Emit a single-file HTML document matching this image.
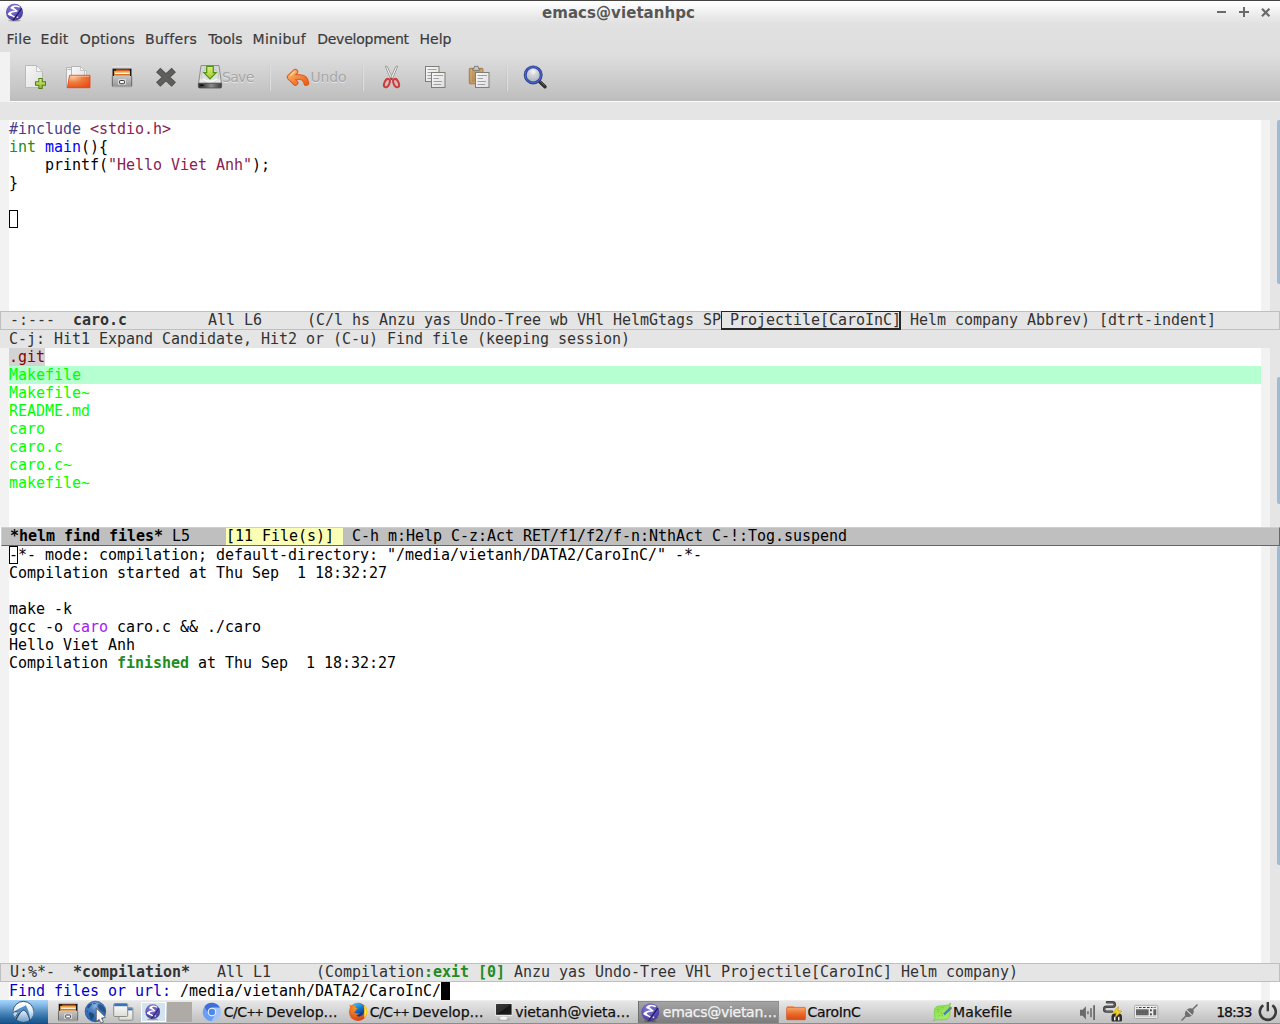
<!DOCTYPE html>
<html lang="en">
<head>
<meta charset="utf-8">
<title>emacs@vietanhpc</title>
<style>
html,body{margin:0;padding:0;}
body{width:1280px;height:1024px;overflow:hidden;position:relative;background:#fff;font-family:"DejaVu Sans","Liberation Sans",sans-serif;}
.abs{position:absolute;}
/* ---------- window chrome ---------- */
#topline{left:0;top:0;width:1280px;height:1px;background:#444;}
#titlebar{left:0;top:1px;width:1280px;height:51px;background:linear-gradient(#ffffff 0px,#fbfbfb 4px,#f0f0f0 11px,#e7e7e7 17px,#e1e1e1 23px,#e0e0e0 27px,#dfdfdf 51px);}
#title{left:542px;top:3px;letter-spacing:0.06px;white-space:pre;font:bold 15px/20px "DejaVu Sans","Liberation Sans",sans-serif;color:#575757;}
#menubar{left:0;top:29px;width:1280px;height:24px;font:14px/20px "DejaVu Sans","Liberation Sans",sans-serif;color:#3c3c3c;white-space:pre;-webkit-text-stroke:0.2px currentColor;}
#menubar span{position:absolute;top:0;}
#toolbar{left:10px;top:52px;width:1270px;height:49px;background:linear-gradient(#dfdfdf 0,#dadada 9px,#cfcfcf 24px,#c5c5c5 38px,#bdbdbd 49px);}
#tbhandle{left:0;top:52px;width:10px;height:50px;background:#f2f2f2;}
#tbline{left:10px;top:101px;width:1270px;height:1px;background:#fbfbfb;}
.tbtxt{font:14px/20px "DejaVu Sans","Liberation Sans",sans-serif;color:#a6a6a6;text-shadow:0 1px 0 rgba(255,255,255,0.55);}
.sep{width:1px;height:27px;top:64px;background:#dedede;box-shadow:-1px 0 0 rgba(0,0,0,0.03);}
/* ---------- emacs ---------- */
.mono{font-family:"DejaVu Sans Mono","Liberation Mono",monospace;font-size:15px;line-height:18px;letter-spacing:-0.03px;white-space:pre;color:#000;}
.ln{position:absolute;left:9px;height:18px;}
.fr{background:#f2f2f2;}
.g90{background:#e5e5e5;}
.ml{background:#e5e5e5;color:#333;overflow:hidden;}.ml::after{content:"";position:absolute;left:0;top:0;right:0;bottom:0;border:1px solid #bfbfbf;}
.ml span.t{position:absolute;left:1px;top:0;}.mla span.t{position:absolute;left:0;top:0;}
.mla{background:#bfbfbf;color:#000;overflow:hidden;}.mla::after{content:"";position:absolute;left:0;top:0;right:0;bottom:0;border-style:solid;border-width:1px;border-color:#cfcfcf #666 #666 #cfcfcf;}
b{font-weight:bold;}
.thumb{left:1277px;width:4px;background:#9fbbd4;border-radius:2px 0 0 2px;}
/* ---------- taskbar ---------- */
#taskbar{left:0;top:1000px;width:1280px;height:24px;background:linear-gradient(#f0f0f0 0,#e6e6e6 1.500px,#dedede 6px,#d5d5d5 11px,#cbcbcb 16px,#c3c3c3 21px,#c2c2c2 24px);}
.tk{font:14px/20px "DejaVu Sans","Liberation Sans",sans-serif;color:#111;white-space:pre;top:2px;-webkit-text-stroke:0.25px currentColor;}
</style>
</head>
<body>
<!-- title bar -->
<div class="abs" id="titlebar"></div>
<div class="abs" id="topline"></div>
<div class="abs" id="title">emacs@vietanhpc</div>
<svg class="abs" style="left:0;top:0" width="1280" height="27" viewBox="0 0 1280 27">
<defs><radialGradient id="wE" cx="0.4" cy="0.3" r="0.8"><stop offset="0" stop-color="#8a80d8"/><stop offset="0.6" stop-color="#5a4fb2"/><stop offset="1" stop-color="#3f3590"/></radialGradient></defs>
<ellipse cx="14.500" cy="20.700" rx="6.500" ry="0.900" fill="#444" opacity="0.400"/>
<g transform="translate(14.500 12.300) scale(1)">
<circle cx="0" cy="0" r="8.500" fill="url(#wE)"/>
<path d="M4.600 -5.400C2 -7 -2 -6.600 -3.300 -4.500C-1 -3.600 1 -2.600 2.300 -1.300C-1 -0.900 -5 -0.100 -6 1.700C-4 3 -1.500 3.500 -0.200 4.700" fill="none" stroke="#fff" stroke-width="1.500" stroke-linecap="round" stroke-linejoin="round"/><path d="M-6.200 1.700c0.600 -1.500 2.800 -2 4.600 -2.200c-1 0.800 -2 1.400 -1.800 2.200c0.300 0.800 1.600 1.300 2.600 2.200c-2.200 -0.500 -4.600 -1 -5.400 -2.200z" fill="#fff"/><path d="M-3.400 -4.500c0.800 -1.300 2.800 -1.800 4.400 -1.700c-1 0.500 -1.800 1 -1.700 1.700c0.200 0.700 1.400 1.200 2.400 2c-2 -0.400 -4.300 -0.900 -5.100 -2z" fill="#fff"/><circle cx="3" cy="5" r="0.800" fill="#fff"/>
<path d="M-1.700 8.300L7.200 -3.800" stroke="#1a1560" stroke-width="1.100"/>
</g>
<path d="M1217 12h9" stroke="#6a6a6a" stroke-width="2"/>
<path d="M1239 12h10M1244 7v10" stroke="#6a6a6a" stroke-width="2"/>
<path d="M1262 8.700l7.400 7.600M1269.400 8.700l-7.400 7.600" stroke="#6a6a6a" stroke-width="2.200"/>
</svg>
<!-- menu bar -->
<div class="abs" id="menubar"><span style="left:6.5px;letter-spacing:0.43px">File</span><span style="left:40.600px;letter-spacing:0.19px">Edit</span><span style="left:79.700px;letter-spacing:0.18px">Options</span><span style="left:145px;letter-spacing:0.32px">Buffers</span><span style="left:208.200px;letter-spacing:-0.05px">Tools</span><span style="left:252.600px;letter-spacing:0.28px">Minibuf</span><span style="left:317.200px;letter-spacing:-0.24px">Development</span><span style="left:419.600px">Help</span></div>
<!-- tool bar -->
<div class="abs" id="toolbar"></div>
<div class="abs" id="tbhandle"></div>
<div class="abs" id="tbline"></div>
<div class="abs tbtxt" style="left:222px;top:67px;letter-spacing:-0.7px">Save</div>
<div class="abs tbtxt" style="left:310.500px;top:67px;letter-spacing:-0.17px">Undo</div>
<div class="abs sep" style="left:270px"></div>
<div class="abs sep" style="left:363px"></div>
<div class="abs sep" style="left:507px"></div>

<!-- ICONS-TOOLBAR-START -->
<svg class="abs" style="left:0;top:52px" width="600" height="50" viewBox="0 52 600 50">
<defs>
<linearGradient id="gPage" x1="0" y1="0" x2="1" y2="1"><stop offset="0" stop-color="#f8f8f8"/><stop offset="1" stop-color="#dedede"/></linearGradient>
<linearGradient id="gOr" x1="0" y1="0" x2="0" y2="1"><stop offset="0" stop-color="#f8a66b"/><stop offset="0.5" stop-color="#f0703a"/><stop offset="1" stop-color="#e4471b"/></linearGradient>
<radialGradient id="gOr2" cx="0.250" cy="0.150" r="1"><stop offset="0" stop-color="#f8c898"/><stop offset="0.450" stop-color="#ee7a3c"/><stop offset="1" stop-color="#ea4a16"/></radialGradient><linearGradient id="gGr" x1="0" y1="0" x2="0" y2="1"><stop offset="0" stop-color="#d8ec84"/><stop offset="1" stop-color="#92ba2a"/></linearGradient>
<linearGradient id="gDr" x1="0" y1="0" x2="0" y2="1"><stop offset="0" stop-color="#c6c6c6"/><stop offset="1" stop-color="#989898"/></linearGradient><linearGradient id="gDrT" x1="0" y1="0" x2="0" y2="1"><stop offset="0" stop-color="#ececec"/><stop offset="1" stop-color="#bcbcbc"/></linearGradient>
<linearGradient id="gHd" x1="0" y1="0" x2="0" y2="1"><stop offset="0" stop-color="#d2d2d2"/><stop offset="0.700" stop-color="#dedede"/><stop offset="1" stop-color="#efefef"/></linearGradient><linearGradient id="gHdF" x1="0" y1="0" x2="1" y2="0"><stop offset="0" stop-color="#2c2c2c"/><stop offset="0.250" stop-color="#4a4a4a"/><stop offset="0.550" stop-color="#8c8c8c"/><stop offset="1" stop-color="#3c3c3c"/></linearGradient><linearGradient id="gGr2" x1="0" y1="0" x2="0" y2="1"><stop offset="0" stop-color="#dcec7a"/><stop offset="1" stop-color="#a2c832"/></linearGradient>
<linearGradient id="gUn" x1="0" y1="0" x2="1" y2="1"><stop offset="0" stop-color="#fbb565"/><stop offset="1" stop-color="#ee5f1c"/></linearGradient>
<radialGradient id="gLens" cx="0.5" cy="0.300" r="0.650"><stop offset="0" stop-color="#fafafa"/><stop offset="0.350" stop-color="#d4d6da"/><stop offset="1" stop-color="#aeb2bc"/></radialGradient>
<linearGradient id="gClip" x1="0" y1="0" x2="0" y2="1"><stop offset="0" stop-color="#c9a06a"/><stop offset="1" stop-color="#b48850"/></linearGradient>
</defs>
<!-- new -->
<g>
<path d="M25.500 66h11l6 6v16h-17z" fill="#8a8a8a" opacity="0.350"/>
<path d="M25.500 65.500h11l6 6v16h-17z" fill="url(#gPage)" stroke="#b9b9b9" stroke-width="1"/>
<path d="M36.500 65.500v6h6z" fill="#f6f6f6" stroke="#bdbdbd" stroke-width="0.800"/>
<path d="M38.300 78h4.400v3.300h3.300v4.400h-3.300v3.300h-4.400v-3.300h-3.300v-4.400h3.300z" fill="#4f7f12"/>
<path d="M39.300 79h2.400v3.300h3.300v2.400h-3.300v3.300h-2.400v-3.300h-3.300v-2.400h3.300z" fill="url(#gGr)"/>
</g>
<!-- open -->
<g>
<path d="M66.500 67.500h5v20h-5z" fill="#f4f4f4" stroke="#b4b4b4"/>
<path d="M67.500 69.500h3.500" stroke="#f3a558" stroke-width="1"/>
<path d="M71.500 66.500h9l4 4v17h-13z" fill="url(#gPage)" stroke="#b4b4b4"/>
<path d="M80.500 66.500v4h4z" fill="#f8f8f8" stroke="#bdbdbd" stroke-width="0.800"/>
<path d="M84.500 70.500h2v8h-2z" fill="#ededed" stroke="#bdbdbd" stroke-width="0.800"/>
<path d="M69.500 75.300h20.500v12.400h-22.700z" fill="url(#gOr2)" stroke="#d9441a" stroke-width="0.800"/>
<path d="M70.300 76.300h19" stroke="#fbc9a4" stroke-width="0.800"/>
</g>
<!-- dired drawer -->
<g id="drw">
<rect x="112" y="66" width="20" height="3" rx="0.800" fill="url(#gDrT)"/>
<rect x="112.500" y="68.700" width="19" height="7.500" fill="#1c1c1c"/>
<rect x="116" y="69.400" width="13.500" height="2" fill="#c9521a"/>
<rect x="114" y="70.800" width="16" height="5.400" fill="#f0a040"/>
<rect x="115" y="72.600" width="14.500" height="1.400" fill="#fff6e8"/>
<rect x="114" y="74.200" width="16" height="0.700" fill="#c9641e"/>
<rect x="112" y="76" width="20" height="10" fill="url(#gDr)"/>
<path d="M112.300 76v10M131.700 76v10" stroke="#4a4a4a" stroke-width="0.700"/>
<rect x="118" y="78.900" width="8" height="5.800" rx="0.800" fill="#dadada"/>
<rect x="119.600" y="80.500" width="4.800" height="3.200" rx="0.600" fill="#fafafa" stroke="#3e3e3e" stroke-width="1"/>
<rect x="112" y="86" width="20" height="1.200" fill="#6e6e6e" opacity="0.450"/>
</g>
<!-- close X -->
<g>
<path d="M158.200 70l15.600 14.600M173.800 70l-15.600 14.600" stroke="#4c4c4a" stroke-width="6.200" stroke-linecap="butt"/>
<path d="M158.700 70.500l14.600 13.600M173.300 70.500l-14.600 13.600" stroke="#5e5e5b" stroke-width="4.600" stroke-linecap="butt"/>
</g>
<!-- save -->
<g>
<path d="M201 65.500h18l2.400 17.700h-22.800z" fill="url(#gHd)" stroke="#8e8e8e" stroke-width="1"/>
<ellipse cx="210" cy="75.500" rx="8.600" ry="7.600" fill="none" stroke="#bdbdbd" stroke-width="0.700"/>
<path d="M202.500 79q7.500 5 15 0" fill="none" stroke="#f4f4f4" stroke-width="1.800"/>
<path d="M198.400 83.300h23.200v3.400q0 1.300-1.300 1.300h-20.600q-1.300 0-1.300-1.300z" fill="url(#gHdF)" stroke="#4e4e4e" stroke-width="0.800"/>
<rect x="200.300" y="84.600" width="3.400" height="1.500" rx="0.700" fill="#0a0a0a"/>
<path d="M206.700 66.400h6.600v6.200h2.800l-6.100 6.400l-6.100-6.400h2.800z" fill="url(#gGr2)" stroke="#4c9410" stroke-width="1.200" stroke-linejoin="miter"/>
</g>
<!-- undo -->
<g>
<path d="M295.300 71.800l-5.600 5.400l5.800 5.600M290.500 77.200h9.500q5.500 0.300 6.300 5.800" fill="none" stroke="#d9561a" stroke-width="5.800" stroke-linecap="round" stroke-linejoin="round"/>
<path d="M295.300 71.800l-5.600 5.400l5.800 5.600M290.500 77.200h9.500q5.500 0.300 6.300 5.800" fill="none" stroke="url(#gUn)" stroke-width="4" stroke-linecap="round" stroke-linejoin="round"/>
<path d="M294.500 71.600l-4 3.900" fill="none" stroke="#fdd29a" stroke-width="1.500" stroke-linecap="round"/>
</g>
<!-- cut -->
<g>
<path d="M385.300 66.300l1.800 0l5.600 12.300l-1.700 1.300z" fill="#f4f4f4" stroke="#8a8a86" stroke-width="0.800"/>
<path d="M397.700 66.300l-1.800 0l-5.600 12.300l1.700 1.300z" fill="#f4f4f4" stroke="#8a8a86" stroke-width="0.800"/>
<ellipse cx="386.900" cy="83.100" rx="2.500" ry="4.400" transform="rotate(24 386.900 83.100)" fill="#e8a8a8" fill-opacity="0.450" stroke="#cb3c3c" stroke-width="2"/>
<ellipse cx="396.100" cy="83.100" rx="2.500" ry="4.400" transform="rotate(-24 396.100 83.100)" fill="#e8a8a8" fill-opacity="0.450" stroke="#cb3c3c" stroke-width="2"/>
<circle cx="391.500" cy="78.800" r="1.300" fill="#c43030"/>
</g>
<!-- copy -->
<g>
<rect x="425.500" y="66.500" width="13.500" height="15" fill="url(#gPage)" stroke="#7e7e76" stroke-width="1"/>
<path d="M427.500 69.500h9M427.500 72.500h4M427.500 75.500h4M427.500 78.500h4" stroke="#9f9f9f" stroke-width="1"/>
<rect x="431.500" y="72.500" width="13.500" height="15" fill="url(#gPage)" stroke="#7e7e76" stroke-width="1"/>
<path d="M433.500 75.500h9.500M433.500 78.500h5.500M433.500 81.500h8.500M433.500 84.500h7.500" stroke="#9f9f9f" stroke-width="1"/>
</g>
<!-- paste -->
<g>
<rect x="469.300" y="68.300" width="13.600" height="15.500" rx="0.800" fill="url(#gClip)" stroke="#a77d45" stroke-width="1"/>
<rect x="471" y="70" width="10.200" height="12.200" fill="none" stroke="#d9b888" stroke-width="0.600"/>
<path d="M474.500 66.300h3.500l0.600 2.400h1.200v1.600h-7.100v-1.600h1.200z" fill="#c9c9c9" stroke="#6a6a6a" stroke-width="0.800"/>
<rect x="475.500" y="72.500" width="13.500" height="15" fill="url(#gPage)" stroke="#7e7e76" stroke-width="1"/>
<path d="M477.500 75.500h9.500M477.500 78.500h5.500M477.500 81.500h8.500M477.500 84.500h7.500" stroke="#9f9f9f" stroke-width="1"/>
</g>
<!-- search -->
<g>
<path d="M539.200 81.200l5.800 5.600" stroke="#2c2c2c" stroke-width="3.400" stroke-linecap="round"/>
<path d="M539.600 80.800l5 4.900" stroke="#6a6a6a" stroke-width="0.900" stroke-linecap="round"/>
<circle cx="533.200" cy="74.900" r="7.900" fill="url(#gLens)" stroke="#2c44a6" stroke-width="2.700"/>
<circle cx="533.200" cy="74.900" r="9.100" fill="none" stroke="#1f2f78" stroke-width="0.600" opacity="0.700"/><circle cx="533.200" cy="74.900" r="8" fill="none" stroke="#5a74d4" stroke-width="0.800"/>
</g>
</svg>
<!-- ICONS-TOOLBAR-END -->

<!-- emacs frame -->
<div class="abs g90" style="left:0;top:102px;width:1280px;height:18px"></div>
<!-- window 1 : caro.c -->
<div class="abs fr" style="left:0;top:120px;width:9px;height:191px"></div>
<div class="abs fr" style="left:1261px;top:120px;width:9px;height:191px"></div>
<div class="abs g90" style="left:1270px;top:120px;width:10px;height:191px"></div>
<div class="abs thumb" style="top:120px;height:164px"></div>
<div class="ln mono" style="top:120px"><span style="color:#483d8b">#include</span> <span style="color:#8b2252">&lt;stdio.h&gt;</span></div>
<div class="ln mono" style="top:138px"><span style="color:#228b22">int</span> <span style="color:#0000ff">main</span>(){</div>
<div class="ln mono" style="top:156px">    printf(<span style="color:#8b2252">"Hello Viet Anh"</span>);</div>
<div class="ln mono" style="top:174px">}</div>
<div class="abs" style="left:9px;top:210px;width:8px;height:16px;border:1px solid #000;box-sizing:content-box;width:7px"></div>
<div class="abs ml mono" style="left:0;top:311px;width:1280px;height:19px"><span class="t"> -:---  <b>caro.c</b>         All L6     (C/l hs Anzu yas Undo-Tree wb VHl HelmGtags SP Projectile[CaroInC] Helm company Abbrev) [dtrt-indent]</span></div>
<div class="abs" style="left:721px;top:311px;width:180px;height:19px;box-sizing:border-box;border-style:solid;border-color:#262626;border-width:1px 2px 2px 1px"></div>


<!-- helm window -->
<div class="abs g90" style="left:0;top:330px;width:1280px;height:18px"></div>
<div class="abs fr" style="left:0;top:348px;width:9px;height:179px"></div>
<div class="abs fr" style="left:1261px;top:348px;width:9px;height:179px"></div>
<div class="abs g90" style="left:1270px;top:348px;width:10px;height:179px"></div>
<div class="abs thumb" style="top:377px;height:127px"></div>
<div class="ln mono" style="top:330px;color:#333">C-j: Hit1 Expand Candidate, Hit2 or (C-u) Find file (keeping session)</div>
<div class="ln mono" style="top:348px"><span style="color:#8b0000;background:#d3d3d3">.git</span></div>
<div class="abs" style="left:9px;top:366px;width:1252px;height:18px;background:#b5ffd1"></div>
<div class="ln mono" style="top:366px;color:#00ff00">Makefile</div>
<div class="ln mono" style="top:384px;color:#00ff00">Makefile~</div>
<div class="ln mono" style="top:402px;color:#00ff00">README.md</div>
<div class="ln mono" style="top:420px;color:#00ff00">caro</div>
<div class="ln mono" style="top:438px;color:#00ff00">caro.c</div>
<div class="ln mono" style="top:456px;color:#00ff00">caro.c~</div>
<div class="ln mono" style="top:474px;color:#00ff00">makefile~</div>
<div class="abs mla mono" style="left:1px;top:527px;width:1279px;height:19px"><span class="t"> <b>*helm find files*</b> L5    <span style="background:#faffb5">[11 File(s)] </span> C-h m:Help C-z:Act RET/f1/f2/f-n:NthAct C-!:Tog.suspend</span></div>


<!-- compilation window -->
<div class="abs fr" style="left:0;top:546px;width:9px;height:417px"></div>
<div class="abs fr" style="left:1261px;top:546px;width:9px;height:417px"></div>
<div class="abs g90" style="left:1270px;top:546px;width:10px;height:417px"></div>
<div class="abs thumb" style="top:546px;height:319px"></div>
<div class="ln mono" style="top:546px">-*- mode: compilation; default-directory: "/media/vietanh/DATA2/CaroInC/" -*-</div>
<div class="abs" style="left:9px;top:546px;width:7px;height:16px;border:1px solid #000"></div>
<div class="ln mono" style="top:564px">Compilation started at Thu Sep  1 18:32:27</div>
<div class="ln mono" style="top:600px">make -k</div>
<div class="ln mono" style="top:618px">gcc -o <span style="color:#a020f0">caro</span> caro.c &amp;&amp; ./caro</div>
<div class="ln mono" style="top:636px">Hello Viet Anh</div>
<div class="ln mono" style="top:654px">Compilation <b style="color:#228b22">finished</b> at Thu Sep  1 18:32:27</div>
<div class="abs ml mono" style="left:0;top:963px;width:1280px;height:19px"><span class="t"> U:%*-  <b>*compilation*</b>   All L1     (Compilation<b style="color:#228b22">:exit [0]</b> Anzu yas Undo-Tree VHl Projectile[CaroInC] Helm company)</span></div>


<!-- minibuffer -->
<div class="abs fr" style="left:0;top:982px;width:9px;height:18px"></div>
<div class="abs fr" style="left:1261px;top:982px;width:9px;height:18px"></div>
<div class="ln mono" style="top:982px"><span style="color:#0000cd">Find files or url: </span>/media/vietanh/DATA2/CaroInC/</div>
<div class="abs" style="left:441px;top:982px;width:9px;height:18px;background:#000"></div>


<!-- taskbar -->
<div class="abs" id="taskbar">
<!-- TASK-START -->
<div class="abs" style="left:0;top:0;width:48px;height:24px;background:linear-gradient(#a7d5fb 0,#7db4e2 25%,#4a85b8 55%,#24649c 80%,#1d578a 96%,#173f66 100%)"></div>
<div class="abs" style="left:638px;top:1px;width:141px;height:23px;background:linear-gradient(#a6a6a6,#8b8b8b 60%,#7a7a7a);box-shadow:inset 1px 0 0 #6f6f6f,inset -1px 0 0 #8f8f8f,inset 0 1px 0 #8e8e8e"></div>
<div class="abs" style="left:48px;top:23px;width:1232px;height:1px;background:#8c8c8c"></div>
<svg class="abs" style="left:0;top:0" width="1280" height="24" viewBox="0 1000 1280 24">
<defs>
<radialGradient id="tE" cx="0.4" cy="0.3" r="0.8"><stop offset="0" stop-color="#8a80d8"/><stop offset="0.6" stop-color="#5a4fb2"/><stop offset="1" stop-color="#3f3590"/></radialGradient>
<linearGradient id="tOr" x1="0" y1="0" x2="0" y2="1"><stop offset="0" stop-color="#f6a868"/><stop offset="0.5" stop-color="#ec6a2c"/><stop offset="1" stop-color="#d24a14"/></linearGradient>
<linearGradient id="tDr" x1="0" y1="0" x2="0" y2="1"><stop offset="0" stop-color="#bdbdbd"/><stop offset="1" stop-color="#8e8e8e"/></linearGradient>
<radialGradient id="tGl" cx="0.480" cy="0.220" r="0.800"><stop offset="0" stop-color="#8fb4e4"/><stop offset="0.350" stop-color="#4a80c4"/><stop offset="0.800" stop-color="#3068b0"/><stop offset="1" stop-color="#2258a4"/></radialGradient>
<linearGradient id="tWn" x1="0" y1="0" x2="0" y2="1"><stop offset="0" stop-color="#ffffff"/><stop offset="1" stop-color="#dcdcd6"/></linearGradient>
<linearGradient id="tLuS" x1="0" y1="0" x2="0" y2="1"><stop offset="0" stop-color="#18324e" stop-opacity="0.950"/><stop offset="0.400" stop-color="#18324e" stop-opacity="0.700"/><stop offset="0.650" stop-color="#18324e" stop-opacity="0"/></linearGradient><linearGradient id="tLu" x1="0" y1="0" x2="0" y2="1"><stop offset="0" stop-color="#ffffff"/><stop offset="0.45" stop-color="#e4eef8"/><stop offset="1" stop-color="#6f9cc6"/></linearGradient>
<linearGradient id="tMn" x1="0" y1="0" x2="1" y2="1"><stop offset="0" stop-color="#3a3a38"/><stop offset="0.480" stop-color="#2c2c2a"/><stop offset="0.520" stop-color="#161616"/><stop offset="1" stop-color="#1e1e1e"/></linearGradient>
<radialGradient id="tFx" cx="0.350" cy="0.300" r="0.800"><stop offset="0" stop-color="#f39a28"/><stop offset="0.450" stop-color="#e96a22"/><stop offset="1" stop-color="#cc3c1c"/></radialGradient><linearGradient id="tFxB" x1="0.300" y1="0" x2="0.750" y2="1"><stop offset="0" stop-color="#46bef4"/><stop offset="0.400" stop-color="#1a84d4"/><stop offset="0.750" stop-color="#0e4c9c"/><stop offset="1" stop-color="#0a2a6c"/></linearGradient><radialGradient id="tFxY" cx="0.400" cy="0.600" r="0.700"><stop offset="0" stop-color="#fff27c"/><stop offset="0.600" stop-color="#fad618"/><stop offset="1" stop-color="#f0a41c"/></radialGradient>
<pattern id="tKb" x="1136" y="1009.300" width="1.500" height="1.500" patternUnits="userSpaceOnUse"><rect x="0" y="0" width="1.500" height="1.500" fill="#9a9a9a"/><rect x="0.150" y="0.150" width="1.100" height="1.100" fill="#333"/></pattern><linearGradient id="tLf" x1="0.200" y1="0" x2="0.600" y2="1"><stop offset="0" stop-color="#86dc42"/><stop offset="1" stop-color="#a4ee6a"/></linearGradient><g id="emi">
<circle cx="0" cy="0" r="8.600" fill="url(#tE)"/>
<path d="M4.600 -5.400C2 -7 -2 -6.600 -3.300 -4.500C-1 -3.600 1 -2.600 2.300 -1.300C-1 -0.900 -5 -0.100 -6 1.700C-4 3 -1.500 3.500 -0.200 4.700" fill="none" stroke="#fff" stroke-width="1.500" stroke-linecap="round" stroke-linejoin="round"/><path d="M-6.200 1.700c0.600 -1.500 2.800 -2 4.600 -2.200c-1 0.800 -2 1.400 -1.800 2.200c0.300 0.800 1.600 1.300 2.600 2.200c-2.200 -0.500 -4.600 -1 -5.400 -2.200z" fill="#fff"/><path d="M-3.400 -4.500c0.800 -1.300 2.800 -1.800 4.400 -1.700c-1 0.500 -1.800 1 -1.700 1.700c0.200 0.700 1.400 1.200 2.400 2c-2 -0.400 -4.300 -0.900 -5.100 -2z" fill="#fff"/><circle cx="3" cy="5" r="0.800" fill="#fff"/>
<path d="M-1.700 8.300L7.200 -3.800" stroke="#1a1560" stroke-width="1.100"/>
</g>
</defs>
<!-- lubuntu logo -->
<circle cx="23.400" cy="1011.700" r="10.300" fill="url(#tLu)"/>
<circle cx="23.400" cy="1011.700" r="10.300" fill="none" stroke="url(#tLuS)" stroke-width="0.900"/>
<path d="M13 1012.200C17 1009.500 22 1007 25.200 1005.800L25.800 1004.900L26.200 1006C28.500 1010 29.800 1015 30 1020.500C28.500 1015 26.500 1011 23.500 1010.200C21 1011 18.500 1015 16.300 1019.300L15.600 1018.600C17 1016 18 1014 19.200 1012.600C17 1012 15 1012 13 1012.200Z" fill="#4f8ec6"/>
<path d="M16.100 1019.500C18.500 1015 21 1011 23.500 1010.200C26.500 1011 28.500 1015 30 1020.700" fill="none" stroke="#142c48" stroke-width="0.800"/>
<path d="M13.200 1012.300C15 1011.800 16.500 1011.600 17.800 1012.200M18.300 1012.600L15 1017.800M19.500 1013L16.300 1019" fill="none" stroke="#142c48" stroke-width="0.700"/>
<!-- drawer -->
<use href="#drw" transform="translate(58.200 1001.400) scale(0.990 0.940) translate(-112 -66)"/>
<!-- globe -->
<circle cx="95.450" cy="1011.450" r="10.300" fill="url(#tGl)" stroke="#1c4c9c" stroke-width="0.700"/>
<path d="M87.300 1006.500c1-1.800 2.600-3 4.300-3.300c0.600 0.700 0.300 1.700-0.600 2.500c-0.800 0.800-1.300 1.800-2.300 2.500c-0.800 0.400-1.500-0.300-1.400-1.700z" fill="#1d4a78" opacity="0.800"/>
<path d="M93 1003.200c1-0.500 2.300-0.400 3 0.100c-0.500 0.700-1.600 1-2.700 0.900z" fill="#1d4a78" opacity="0.700"/>
<path d="M89.200 1012.300c1.500-0.500 3.300 0.300 4.400 1.700c0.800 1.200 0.600 2.700-0.300 4c-0.600 0.900-1.200 1.900-2 1.700c-1-0.800-1.300-2.500-1.900-3.800c-0.600-1.300-1-2.500-0.200-3.600z" fill="#1a446e" opacity="0.850"/>
<path d="M87 1010.800l1.200 0.300l-0.200 0.700l-1.100-0.300z" fill="#15385c"/>
<path d="M98 1004.500c2-0.600 4.200 0.400 5.600 2.200c1.200 1.600 1.900 3.600 1.700 5.600c-1.200 0.800-2.600-0.200-3.800-1.300c-1.300-1.200-2.800-2.300-3.600-3.800c-0.500-1-0.500-2 0.100-2.700z" fill="#1d4a78" opacity="0.750"/>
<path d="M96.300 1008.200v13.300l2.800-2.100l1.900 3.700l2.500-1l-2-3.900l4.100-0.900z" fill="#f6f6f6" stroke="#5a5a5a" stroke-width="0.800" stroke-linejoin="round"/>
<!-- show desktop windows -->
<rect x="118.900" y="1007.700" width="14" height="12.500" rx="1" fill="url(#tWn)" stroke="#8a8a86" stroke-width="1"/>
<rect x="119.400" y="1008.200" width="13" height="2.200" fill="#3a72b8"/>
<rect x="113.700" y="1003.500" width="14" height="13" rx="1" fill="url(#tWn)" stroke="#8a8a86" stroke-width="1"/>
<rect x="114.200" y="1004" width="13" height="2.200" fill="#3a72b8"/>
<!-- pager -->
<rect x="141" y="1002" width="25" height="20" fill="#ffffff"/>
<rect x="142" y="1003" width="23" height="18" fill="#d4e3f0"/>
<rect x="167" y="1002" width="25" height="20" fill="#aeaaa5"/>
<use href="#emi" transform="translate(152.700 1011.700) scale(0.860)"/>
<ellipse cx="152.700" cy="1019.300" rx="5.500" ry="0.900" fill="#555" opacity="0.450"/>
<!-- chromium -->
<path d="M204.22 1006.96 A9.20 9.20 0 0 1 220.14 1007.75 L211.95 1007.75 A4.20 4.20 0 0 0 208.31 1014.05 Z" fill="#3f6fd8"/>
<path d="M220.14 1007.75 A9.20 9.20 0 0 1 211.49 1021.14 L215.59 1014.05 A4.20 4.20 0 0 0 211.95 1007.75 Z" fill="#a4c4f8"/>
<path d="M211.49 1021.14 A9.20 9.20 0 0 1 204.22 1006.96 L208.31 1014.05 A4.20 4.20 0 0 0 215.59 1014.05 Z" fill="#6a9ef2"/>
<circle cx="211.95" cy="1011.95" r="4.200" fill="#eef3fc"/>
<circle cx="211.95" cy="1011.95" r="3.200" fill="#4a8af0"/>
<!-- firefox -->
<circle cx="358" cy="1011.800" r="9.100" fill="url(#tFx)"/>
<path d="M349.300 1004.500L352.300 1006.200L350.500 1008.500z" fill="#ee7420"/>
<path d="M363.800 1004.600C366.300 1006 367.400 1009 367.200 1012C367 1014.500 365.800 1016.800 364 1018.200C364.300 1016 364.400 1013.500 364.200 1011C364 1008.500 364 1006.500 363.800 1004.600Z" fill="url(#tFxY)"/>
<path d="M352.200 1005.300C354 1003.500 356.500 1002.700 358.500 1002.700C361 1002.800 362.600 1004 363.400 1005.600C364.300 1007.500 364.400 1010 364 1012C363.500 1014 362 1015.800 359.500 1016.400C358.300 1016.600 357 1016.300 356.300 1015.800L360 1013.200L358 1013.400L355 1013L354.200 1011.600L355.700 1011.200L355.900 1009.900L357.700 1008.400L355.300 1007.600L355.700 1005.200L355 1005.800Z" fill="url(#tFxB)"/>
<!-- terminal monitor -->
<ellipse cx="503.700" cy="1019.400" rx="6.800" ry="1.700" fill="#8e8e8e" opacity="0.350"/>
<rect x="495.200" y="1003.300" width="17.200" height="12.800" rx="1" fill="#e9e9e9"/>
<rect x="496" y="1004.100" width="15.600" height="10.700" rx="0.600" fill="url(#tMn)"/>
<path d="M501.800 1016h3.800l0.600 1.800h-5z" fill="#cfcfcf"/>
<ellipse cx="503.600" cy="1018.300" rx="3.700" ry="1.500" fill="#f4f4f4"/>
<!-- active emacs -->
<use href="#emi" transform="translate(650.300 1012.100) scale(1.040)"/>
<ellipse cx="650.300" cy="1021.200" rx="6.500" ry="0.900" fill="#333" opacity="0.450"/>
<!-- folder -->
<path d="M787 1006h6.500l1.200 1.600h10.300v12.200h-18z" fill="#f0a070"/>
<rect x="786.600" y="1007.400" width="18.800" height="12.400" rx="0.800" fill="url(#tOr)" stroke="#cf4c16" stroke-width="0.600"/>
<!-- leafpad -->
<path d="M933.100 1020.800L935.300 1018.400C934.200 1016 933.900 1012 934.800 1009C935.500 1007 937 1006.200 939 1006C942 1005.700 946 1005.600 948.300 1004.900L950.700 1003.100L949.700 1006C950.300 1009 950.300 1013 949.500 1016C949 1018 947.800 1019 946 1019.300C943 1019.800 939 1020 936.600 1019.600Z" fill="url(#tLf)" stroke="#6fcb30" stroke-width="0.700" stroke-linejoin="round"/>
<path d="M937 1009.600h3M941.500 1007.600h2M937 1012h2M940.500 1012.800l2 0.800M938 1016.300l2.300-1" stroke="#72c238" stroke-width="0.700" fill="none"/>
<path d="M943.200 1013.900L949.500 1007.800L950.900 1009.200L944.600 1015.300Z" fill="#4a7cc8" stroke="#3f6cb4" stroke-width="0.400"/>
<path d="M943.200 1013.900L944.600 1015.300L942.200 1016.300Z" fill="#ecd890"/>
<path d="M942.200 1016.300l0.500-1l0.500 0.700z" fill="#3a3210"/>
<path d="M949.500 1007.800L950.600 1006.700L952 1008.100L950.900 1009.200Z" fill="#8c8c8c" stroke="#5e5e5e" stroke-width="0.400"/>
<!-- volume -->
<path d="M1080 1009.800h2.600l3.300 -3.600v13.200l-3.300 -3.600h-2.600z" fill="#6a6a6a"/>
<rect x="1087.200" y="1011.200" width="1.500" height="3" fill="#6a6a6a"/>
<rect x="1090.200" y="1008.200" width="1.600" height="9" fill="#6a6a6a"/>
<rect x="1093.200" y="1005.200" width="1.800" height="14.800" fill="#6a6a6a"/>
<!-- power cable -->
<path d="M1107 1002.200h5.500c3.200 0 3.200 4.600 0 4.600h-6c-3.200 0 -3.200 4.800 0 4.800h5.500" fill="none" stroke="#3a3a3a" stroke-width="2.400" stroke-linecap="round"/>
<path d="M1107 1002.200h5.500c3.200 0 3.200 4.600 0 4.600h-6c-3.200 0 -3.200 4.800 0 4.800h5.500" fill="none" stroke="#777" stroke-width="0.800" stroke-linecap="round"/>
<path d="M1111.500 1016.500c0 -2 1.500 -3 3 -3h4.500c1.500 0 3 1 3 3v3.500c0 1 -0.800 1.500 -1.500 1.500h-7.500c-0.800 0 -1.500 -0.500 -1.500 -1.500z" fill="#2e2e2e"/>
<rect x="1114" y="1016.800" width="1.500" height="3.600" fill="#f0f0f0"/>
<rect x="1118" y="1016.800" width="1.500" height="3.600" fill="#f0f0f0"/>
<path d="M1118.500 1006.500l-5.800 6.300l3.600 0.400l-1.200 4.600l6.800 -6.800l-3.800 -0.400z" fill="#f2cf24" stroke="#b89410" stroke-width="0.500"/>
<!-- keyboard -->
<rect x="1134.500" y="1005.300" width="23.300" height="13.200" rx="1.200" fill="#ededed" stroke="#9c9c9c" stroke-width="0.800"/>
<path d="M1136.500 1007.500h1M1139 1007.500h2.500M1143 1007.500h2.500M1147 1007.500h2.500M1151 1007.500h1.500" stroke="#3a3a3a" stroke-width="1"/>
<rect x="1153.500" y="1006.900" width="2.600" height="1.100" fill="#4ab82a"/>
<rect x="1136" y="1009.300" width="12.600" height="6" fill="url(#tKb)"/>
<rect x="1150" y="1009.300" width="1.800" height="2" fill="#4a4a4a"/><rect x="1150" y="1013.300" width="1.800" height="2" fill="#4a4a4a"/>
<rect x="1153.300" y="1009.300" width="3" height="6" fill="url(#tKb)"/>
<rect x="1136" y="1016" width="20.300" height="1.300" fill="#d0d0d0"/>
<!-- network -->
<path d="M1181.500 1020.500L1197.500 1004.500" stroke="#6e6e6e" stroke-width="1.500"/>
<ellipse cx="1189.300" cy="1012.600" rx="5" ry="3.800" transform="rotate(-45 1189.300 1012.600)" fill="#6e6e6e"/>
<path d="M1186.700 1010.200l5 5" stroke="#dedede" stroke-width="1.100"/>
<!-- power -->
<path d="M1263.300 1005.300a8 8 0 1 0 9 0" fill="none" stroke="#3a3a3a" stroke-width="2.600" stroke-linecap="butt"/>
<path d="M1267.800 1002v9.300" stroke="#3a3a3a" stroke-width="2.400"/>
</svg>
<span class="abs tk" id="t1" style="left:223.75px;letter-spacing:-0.52px">C/C</span><span class="abs tk" style="left:246.40px;font-size:11px;top:3px;letter-spacing:-1.200px">++</span><span class="abs tk" style="left:261.45px"> Develop…</span>
<span class="abs tk" id="t2" style="left:369.75px;letter-spacing:-0.52px">C/C</span><span class="abs tk" style="left:392.40px;font-size:11px;top:3px;letter-spacing:-1.200px">++</span><span class="abs tk" style="left:407.45px"> Develop…</span>
<span class="abs tk" id="t3" style="left:515.2px;letter-spacing:-0.05px">vietanh@vieta…</span>
<span class="abs tk" id="t4" style="left:662.8px;letter-spacing:-0.28px;color:#f2f2f2">emacs@vietan…</span>
<span class="abs tk" id="t5" style="left:807.6px;letter-spacing:-0.33px">CaroInC</span>
<span class="abs tk" id="t6" style="left:953.1px;letter-spacing:0.13px">Makefile</span>
<span class="abs tk" id="t7" style="left:1216.2px;letter-spacing:-1.06px">18:33</span>
<!-- TASK-END -->
</div>
</body>
</html>
